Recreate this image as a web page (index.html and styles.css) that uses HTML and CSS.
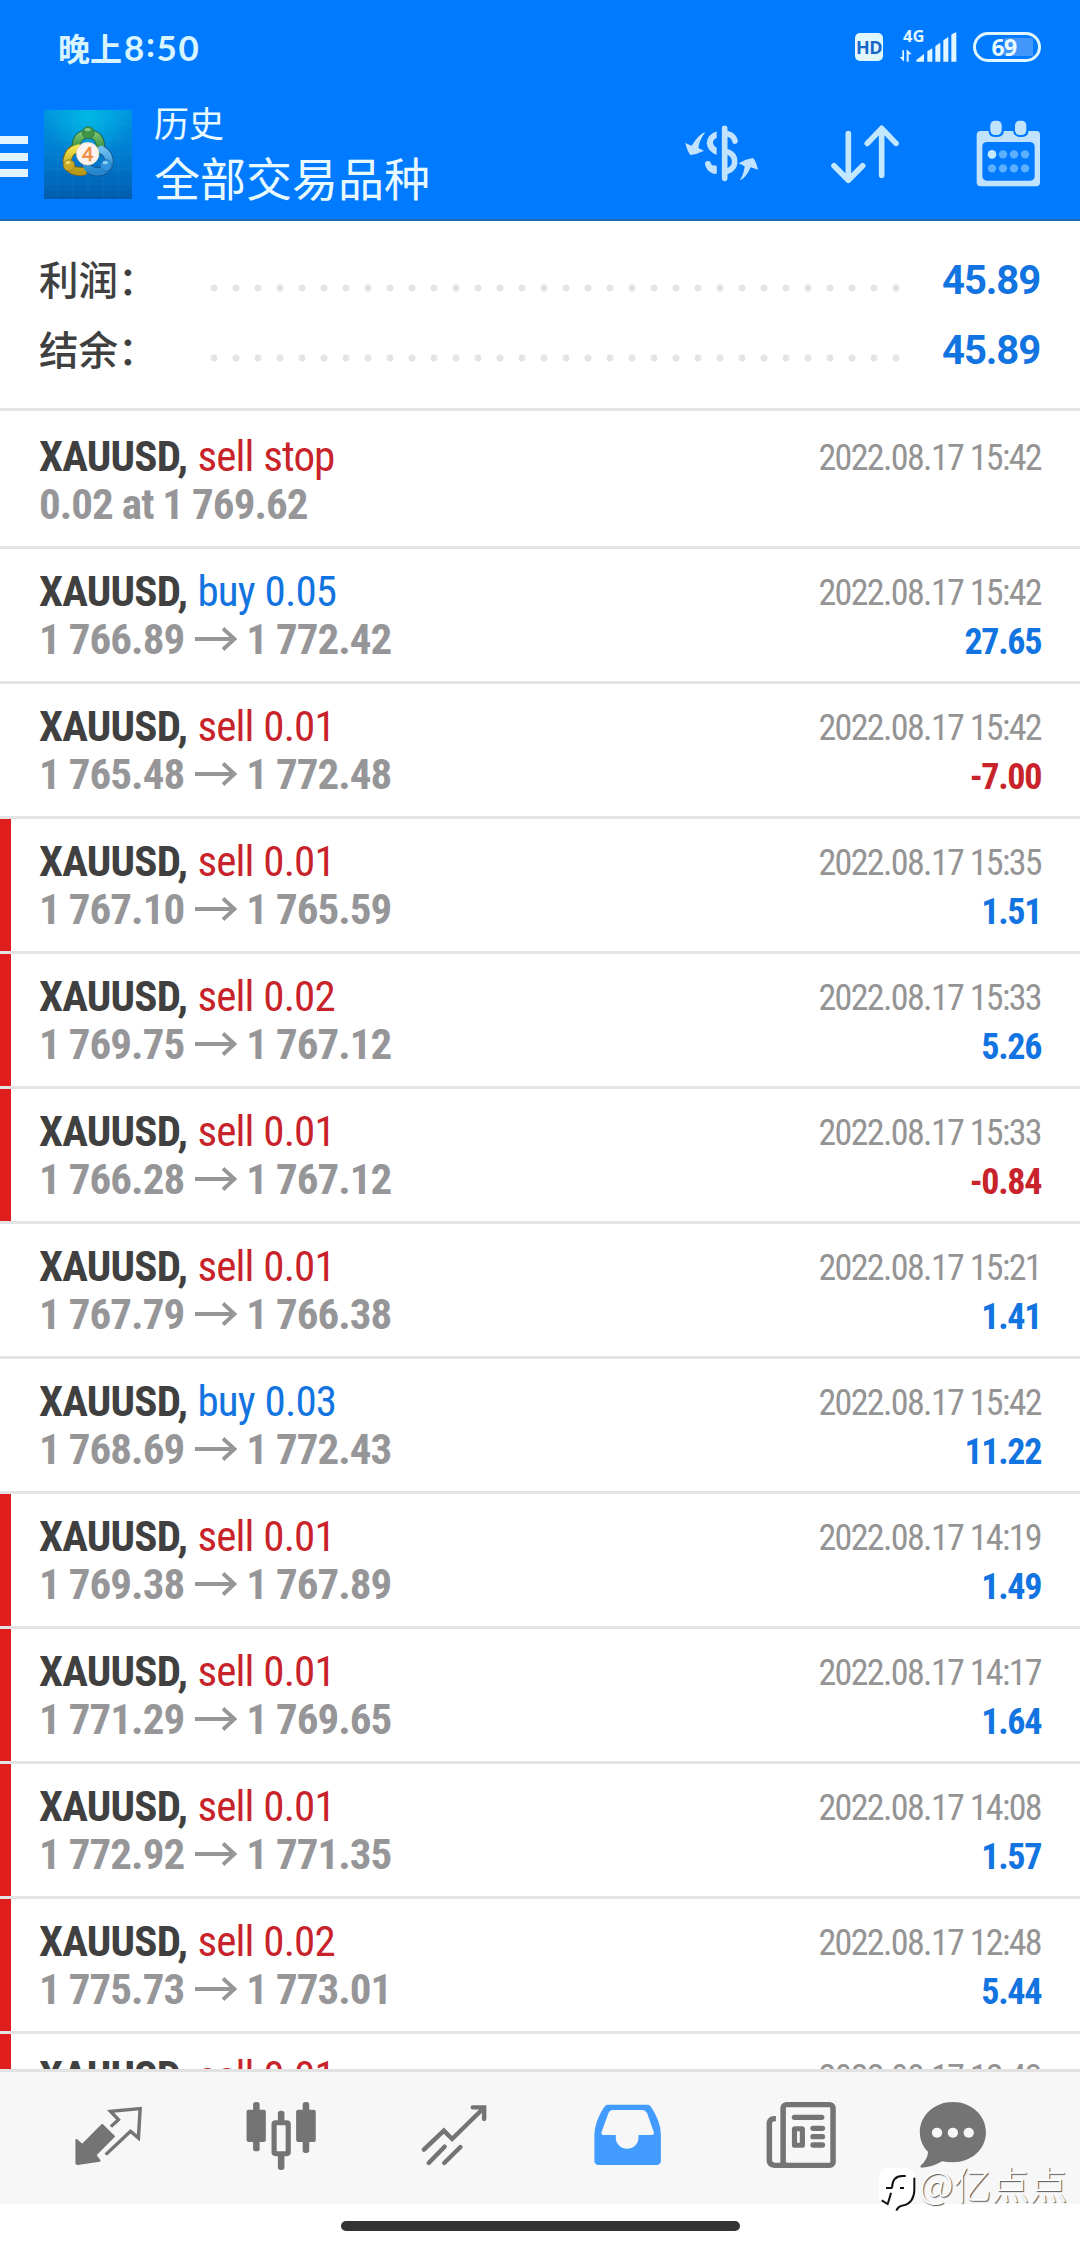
FILE: index.html
```html
<!DOCTYPE html>
<html lang="zh-CN">
<head>
<meta charset="utf-8">
<title>历史</title>
<link rel="stylesheet" href="styles.css">
</head>
<body>
<svg class="defs" width="0" height="0">
  <symbol id="arrow" viewBox="0 0 42 24"><path d="M0 12H39M28 1.5L39.5 12L28 22.5" fill="none" stroke="currentColor" stroke-width="3.8"/></symbol>
</svg>
<div class="screen">
  <header class="top">
    <div class="status">
      <div class="clock">晚上<span class="digits">8<span class="colon">:</span>50</span></div>
      <div class="indicators">
        <span class="hd">HD</span>
        <div class="signal">
          <span class="net">4G</span>
          <svg class="bars" viewBox="0 0 180 96">
            <path fill="#e0f7ff" d="M52 92V87L75 69V92ZM85 92V61L100 52V92ZM109 92V45L124 35V92ZM133 92V28L148 18V92ZM157 92V12Q158 9 172 4V92Z"/>
            <path fill="#e0f7ff" d="M10 58H15V92L2 78H10ZM23 55L38 70H29V92H23Z"/>
          </svg>
        </div>
        <div class="battery"><span class="level">69</span></div>
      </div>
    </div>
    <div class="bar">
      <div class="menu"><i></i><i></i><i></i></div>
      <svg class="logo" viewBox="0 0 264 267">
        <defs>
          <linearGradient id="bg" x1="0" y1="0" x2="0" y2="1"><stop offset="0" stop-color="#0096e0"/><stop offset=".5" stop-color="#007cd0"/><stop offset="1" stop-color="#005cae"/></linearGradient>
          <radialGradient id="glow" cx=".5" cy=".05" r=".5"><stop offset="0" stop-color="#00b8e4"/><stop offset="1" stop-color="#00b8e4" stop-opacity="0"/></radialGradient>
          <linearGradient id="gr" x1="0" y1="0" x2="0" y2="1"><stop offset="0" stop-color="#79c26e"/><stop offset="1" stop-color="#2f8a3c"/></linearGradient>
          <linearGradient id="ye" x1="0" y1="0" x2="0" y2="1"><stop offset="0" stop-color="#efe04a"/><stop offset="1" stop-color="#b79a18"/></linearGradient>
          <linearGradient id="bl" x1="0" y1="0" x2="0" y2="1"><stop offset="0" stop-color="#6dbdf0"/><stop offset="1" stop-color="#2386cc"/></linearGradient>
        </defs>
        <path fill="url(#bg)" d="M0 0H264V267H0Z"/>
        <path fill="url(#glow)" d="M0 0H264V267H0Z"/>
        <path d="M42 0V267M87 0V267M132 0V267M177 0V267M222 0V267M0 42H264M0 87H264M0 132H264M0 177H264M0 222H264" stroke="#5cc4f4" stroke-opacity=".15" stroke-width="2"/>
        <g fill="none" stroke-linecap="round">
          <path d="M97 120Q92 76 133 70Q174 76 169 120" stroke="#215d38" stroke-width="27"/>
          <path d="M102 114Q74 120 69 152Q72 188 118 184" stroke="#76631a" stroke-width="27"/>
          <path d="M172 118Q198 134 195 160Q182 192 150 184Q133 180 127 166" stroke="#174f8a" stroke-width="27"/>
          <path d="M97 120Q92 76 133 70Q174 76 169 120" stroke="url(#gr)" stroke-width="22"/>
          <path d="M102 114Q74 120 69 152Q72 188 118 184" stroke="url(#ye)" stroke-width="22"/>
          <path d="M172 118Q198 134 195 160Q182 192 150 184Q133 180 127 166" stroke="url(#bl)" stroke-width="22"/>
        </g>
        <circle cx="133" cy="68" r="18" fill="#3f9448" stroke="#2a6f3a" stroke-width="2"/>
        <circle cx="75" cy="166" r="17" fill="#c9a724" stroke="#8a7420" stroke-width="2"/>
        <circle cx="186" cy="166" r="17" fill="#3295dc" stroke="#1c68ac" stroke-width="2"/>
        <ellipse cx="131" cy="59" rx="9" ry="5" fill="#a3dc98" opacity=".7"/>
        <ellipse cx="72" cy="158" rx="8" ry="5" fill="#f6ea80" opacity=".8"/>
        <ellipse cx="184" cy="158" rx="8" ry="5" fill="#a6dbfa" opacity=".8"/>
        <circle cx="131" cy="131" r="34" fill="#fbf4ee" stroke="#e4cdb8" stroke-width="2"/>
        <text class="four" x="131" y="152" text-anchor="middle">4</text>
      </svg>
      <div class="titles">
        <div class="sub">历史</div>
        <div class="main">全部交易品种</div>
      </div>
      <div class="actions">
        <svg class="dollar" viewBox="0 0 300 240">
          <g fill="none" stroke="#c2e3ff" stroke-linecap="round">
            <path d="M149 40V190" stroke-width="17"/>
            <path d="M160 57Q176 61 180 78" stroke-width="17"/>
            <path d="M158 111Q180 118 179 142Q178 160 158 168" stroke-width="17"/>
            <path d="M99 147Q102 160 116 167" stroke-width="18"/>
          </g>
          <path fill="#c2e3ff" d="M125 49Q97 58 95 85Q98 110 125 120V98Q114 92 114 82Q115 73 125 69ZM91 51Q72 56 50 92L31 84Q36 107 46 120Q66 118 87 107L70 99Q72 78 91 51ZM194 196Q213 190 227 157L249 164Q243 138 234 129Q212 132 191 145L209 154Q206 180 194 196ZM125 152V177L112 174V150Z"/>
        </svg>
        <svg class="sort" viewBox="528 345 300 240">
          <path d="M625 401V539M582 497L625 541L668 497M725 526V386M682 430L725 385L768 430" fill="none" stroke="#c2e7ff" stroke-width="17" stroke-linecap="round" stroke-linejoin="round"/>
        </svg>
        <svg class="cal" viewBox="960 345 300 240">
          <path fill="#c2e3ff" fill-rule="evenodd" d="M1021 393H1046V398Q1050 412 1068 411Q1086 412 1091 398V393H1120V398Q1125 412 1143 411Q1160 412 1165 398V393H1190Q1200 394 1200 404V548Q1199 558 1189 559H1021Q1011 558 1010 548V404Q1011 394 1021 393ZM1040 426Q1027 427 1027 439V529Q1028 541 1040 542H1171Q1184 541 1184 529V439Q1183 427 1171 426Z"/>
          <rect x="1051" y="362" width="34" height="43" rx="14" fill="#c2e3ff"/><rect x="1125" y="362" width="34" height="43" rx="14" fill="#c2e3ff"/>
          <circle cx="1056" cy="463" r="13" fill="#c2eaff"/>
          <g fill="#5cb0ff"><circle cx="1089" cy="463" r="12.500"/><circle cx="1122" cy="463" r="12.500"/><circle cx="1155" cy="463" r="12.500"/><circle cx="1056" cy="505" r="12.500"/><circle cx="1089" cy="505" r="12.500"/><circle cx="1122" cy="505" r="12.500"/><circle cx="1155" cy="505" r="12.500"/></g>
        </svg>
      </div>
    </div>
  </header>

  <section class="summary">
    <div class="sum"><span class="label">利润：</span><span class="dots"></span><span class="total">45.89</span></div>
    <div class="sum"><span class="label">结余：</span><span class="dots"></span><span class="total">45.89</span></div>
  </section>

  <main class="list">
    <div class="row first"><div class="deal"><div class="name">XAUUSD, <span class="sell">sell stop</span></div><div class="price">0.02 at 1 769.62</div></div><div class="info"><div class="date">2022.08.17 15:42</div></div></div>
    <div class="row"><div class="deal"><div class="name">XAUUSD, <span class="buy">buy 0.05</span></div><div class="price">1 766.89<svg class="to"><use href="#arrow"/></svg>1 772.42</div></div><div class="info"><div class="date">2022.08.17 15:42</div><div class="pl">27.65</div></div></div>
    <div class="row"><div class="deal"><div class="name">XAUUSD, <span class="sell">sell 0.01</span></div><div class="price">1 765.48<svg class="to"><use href="#arrow"/></svg>1 772.48</div></div><div class="info"><div class="date">2022.08.17 15:42</div><div class="pl loss">-7.00</div></div></div>
    <div class="row marked"><div class="deal"><div class="name">XAUUSD, <span class="sell">sell 0.01</span></div><div class="price">1 767.10<svg class="to"><use href="#arrow"/></svg>1 765.59</div></div><div class="info"><div class="date">2022.08.17 15:35</div><div class="pl">1.51</div></div></div>
    <div class="row marked"><div class="deal"><div class="name">XAUUSD, <span class="sell">sell 0.02</span></div><div class="price">1 769.75<svg class="to"><use href="#arrow"/></svg>1 767.12</div></div><div class="info"><div class="date">2022.08.17 15:33</div><div class="pl">5.26</div></div></div>
    <div class="row marked"><div class="deal"><div class="name">XAUUSD, <span class="sell">sell 0.01</span></div><div class="price">1 766.28<svg class="to"><use href="#arrow"/></svg>1 767.12</div></div><div class="info"><div class="date">2022.08.17 15:33</div><div class="pl loss">-0.84</div></div></div>
    <div class="row"><div class="deal"><div class="name">XAUUSD, <span class="sell">sell 0.01</span></div><div class="price">1 767.79<svg class="to"><use href="#arrow"/></svg>1 766.38</div></div><div class="info"><div class="date">2022.08.17 15:21</div><div class="pl">1.41</div></div></div>
    <div class="row"><div class="deal"><div class="name">XAUUSD, <span class="buy">buy 0.03</span></div><div class="price">1 768.69<svg class="to"><use href="#arrow"/></svg>1 772.43</div></div><div class="info"><div class="date">2022.08.17 15:42</div><div class="pl">11.22</div></div></div>
    <div class="row marked"><div class="deal"><div class="name">XAUUSD, <span class="sell">sell 0.01</span></div><div class="price">1 769.38<svg class="to"><use href="#arrow"/></svg>1 767.89</div></div><div class="info"><div class="date">2022.08.17 14:19</div><div class="pl">1.49</div></div></div>
    <div class="row marked"><div class="deal"><div class="name">XAUUSD, <span class="sell">sell 0.01</span></div><div class="price">1 771.29<svg class="to"><use href="#arrow"/></svg>1 769.65</div></div><div class="info"><div class="date">2022.08.17 14:17</div><div class="pl">1.64</div></div></div>
    <div class="row marked"><div class="deal"><div class="name">XAUUSD, <span class="sell">sell 0.01</span></div><div class="price">1 772.92<svg class="to"><use href="#arrow"/></svg>1 771.35</div></div><div class="info"><div class="date">2022.08.17 14:08</div><div class="pl">1.57</div></div></div>
    <div class="row marked"><div class="deal"><div class="name">XAUUSD, <span class="sell">sell 0.02</span></div><div class="price">1 775.73<svg class="to"><use href="#arrow"/></svg>1 773.01</div></div><div class="info"><div class="date">2022.08.17 12:48</div><div class="pl">5.44</div></div></div>
    <div class="row marked"><div class="deal"><div class="name">XAUUSD, <span class="sell">sell 0.01</span></div></div><div class="info"><div class="date">2022.08.17 12:43</div></div></div>
  </main>

  <nav class="tabs">
    <svg class="tab" preserveAspectRatio="none" viewBox="63.900 231 502.400 240">
      <path fill="#747474" stroke="#747474" stroke-width="6" stroke-linejoin="round" d="M297 315L331 349L277 405L289 422L225 432L222 430V360L239 375Z"/>
      <path fill="none" stroke="#747474" stroke-width="10" d="M322 320L344 299L321 274L407 266L402 354L379 334L307 404"/>
    </svg>
    <svg class="tab" preserveAspectRatio="none" viewBox="566.300 231 502.400 240">
      <g fill="#747474"><rect x="716" y="269" width="56" height="97" rx="6"/><rect x="735" y="246" width="19" height="148" rx="8"/><rect x="860" y="269" width="57" height="97" rx="6"/><rect x="879" y="246" width="19" height="153" rx="8"/><rect x="807" y="272" width="19" height="35" rx="8"/><rect x="807" y="400" width="19" height="50" rx="8"/></g>
      <rect x="796" y="308" width="41" height="93" rx="4" fill="none" stroke="#747474" stroke-width="15"/>
    </svg>
    <svg class="tab" preserveAspectRatio="none" viewBox="1068.700 231 502.400 240">
      <g fill="none" stroke="#747474" stroke-width="13" stroke-linecap="round"><path d="M1231 389L1289 332L1313 357L1404 265M1373 262H1406V297"/><path d="M1245 429L1291 380M1290 429L1337 381"/></g>
    </svg>
    <svg class="tab" preserveAspectRatio="none" viewBox="2.900 231 502.400 240">
      <path fill="#429cff" fill-rule="evenodd" d="M196 254H314Q319 255 322 260C340 288 351 315 351 345V424Q350 434 340 435H168Q159 434 158 424V345C159 315 169 288 187 260Q190 255 196 254ZM213 270Q203 270 199 279L178 338Q178 345 184 345H220V353A33 33 0 0 0 286 353V345H326Q331 344 331 338L311 279Q307 271 298 270Z"/>
    </svg>
    <svg class="tab" preserveAspectRatio="none" viewBox="505.300 231 502.400 240">
      <g fill="none" stroke="#747474"><rect x="706" y="254" width="145" height="182" rx="10" stroke-width="16"/><path d="M685 296H681Q667 297 666 309V422Q667 435 681 436H720" stroke-width="16"/><path d="M739 292H818M793 325H820M793 350H820M793 375H820" stroke-width="16" stroke-linecap="round"/><rect x="739" y="326" width="23" height="50" rx="2" stroke-width="15"/></g>
    </svg>
    <svg class="tab last" preserveAspectRatio="none" viewBox="1007.700 231 377.500 240">
      <path fill="#747474" d="M1199 246C1254 246 1295 287 1295 337C1295 389 1252 427 1199 427Q1180 427 1168 424Q1140 441 1108 443Q1103 441 1105 437Q1125 420 1127 396Q1103 372 1103 337C1103 287 1144 246 1199 246Z"/>
      <g fill="#f7f7f7"><circle cx="1153" cy="338" r="15"/><circle cx="1199" cy="338" r="15"/><circle cx="1245" cy="338" r="15"/></g>
    </svg>
  </nav>
  <footer class="home"><div class="pill"></div></footer>

  <div class="mark">
    <svg class="badge" viewBox="20 228 120 140">
      <path fill="#fff" d="M52 233H108Q134 237 135 268V300Q131 345 84 360L75 350H60Q28 346 26 318V268Q27 238 52 233Z"/>
      <path fill="none" stroke="#111" stroke-width="6" d="M65 294Q66 258 96 258H106M47 294H66M89 294H101M62 308Q56 330 52 342L34 331M132 263V300Q131 338 100 346Q84 348 78 362"/>
    </svg>
    <span class="who">@亿点点</span>
  </div>
</div>
</body>
</html>
```

FILE: styles.css
```css
* { box-sizing: border-box; }
body { margin: 0; background: #fff; }
.defs { position: absolute; }
.screen {
  position: relative;
  width: 1080px;
  height: 2248px;
  display: flex;
  flex-direction: column;
  overflow: hidden;
  font-family: Roboto, "Noto Sans CJK SC", sans-serif;
}

/* header */
.top { height: 221px; flex: none; background: #007aff; border-bottom: 2px solid #1868b8; }
.status { height: 94px; padding: 0 39px 0 58px; display: flex; justify-content: space-between; align-items: center; }
.clock { font: 700 32px/40px "Noto Sans CJK SC", sans-serif; color: #d8f4ff; display: flex; align-items: center; white-space: nowrap; }
.digits { font: 700 35px/40px Lato, sans-serif; letter-spacing: 1.6px; margin-left: 2px; }
.colon { position: relative; top: -4px; }
.indicators { display: flex; align-items: center; }
.hd { width: 28px; height: 28px; border-radius: 5px; background: #e0f7ff; color: #1667c6; font: 700 18px/29px "Open Sans", sans-serif; display: flex; justify-content: center; letter-spacing: -0.5px; }
.signal { position: relative; width: 60px; height: 32px; margin-left: 16px; }
.net { position: absolute; left: 4px; top: -5px; font: 700 16.5px/20px "Open Sans", sans-serif; color: #e0f7ff; }
.bars { display: block; width: 60px; height: 32px; }
.battery { width: 68px; height: 30px; margin-left: 14px; border: 3px solid #e0f7ff; border-radius: 15px; display: flex; justify-content: center; align-items: center; background: linear-gradient(#4397fa, #4397fa) 28px 3px / 29px 18px no-repeat; }
.level { font: 700 23px/24px "Noto Sans", sans-serif; color: #e8faff; letter-spacing: -0.7px; margin-right: 6px; }
.bar { display: flex; }
.menu { width: 28px; height: 41px; margin-top: 42px; display: flex; flex-direction: column; justify-content: space-between; }
.menu i { height: 8px; background: #e0f4ff; }
.logo { width: 88px; height: 89px; margin: 16px 0 0 16px; }
.four { font: 400 58px "Noto Sans", sans-serif; fill: #f08c46; stroke: #f08c46; stroke-width: 2px; }
.titles { width: 290px; margin-left: 22px; color: #e8faff; font-family: "Noto Sans CJK SC", sans-serif; font-weight: 400; white-space: nowrap; }
.sub { font-size: 35px; line-height: 40px; margin-top: 8px; }
.main { font-size: 46px; line-height: 56px; margin-top: 6px; }
.actions { margin: 21px 0 0 231px; display: flex; gap: 44px; }
.actions svg { width: 100px; height: 80px; }
.actions .dollar { margin-right: -3px; }

/* summary */
.summary { height: 187px; flex: none; padding: 24px 40px 0 39px; display: flex; flex-direction: column; }
.sum { height: 70px; display: flex; align-items: center; }
.label { width: 163px; flex: none; font: 500 39.5px/70px "Noto Sans CJK SC", sans-serif; color: #404040; margin-top: -5px; }
.dots { width: 704px; flex: none; height: 8px; margin: 15px 0 0 0.5px; background: radial-gradient(circle at 11px 4px, #e4e4e4 3.2px, transparent 3.9px) 0 0 / 22px 8px repeat-x; }
.total { flex: 1; text-align: right; font-weight: 700; font-size: 40px; line-height: 70px; letter-spacing: -1.1px; color: #1274e0; margin-top: 1px; }

/* history rows */
.list { height: 1661px; flex: none; overflow: hidden; }
.row { height: 135px; border-top: 3px solid #e4e4e4; padding: 18px 39px 0 38px; display: flex; justify-content: space-between; font-family: "Roboto Condensed", Roboto, sans-serif; white-space: nowrap; }
.row.first { height: 138px; padding-top: 21px; }
.row.marked { background: linear-gradient(#e01e1e, #e01e1e) 0 0 / 11px 100% no-repeat; }
.name { font-weight: 700; font-size: 43px; line-height: 48px; letter-spacing: -0.8px; word-spacing: 1px; color: #404040; padding-left: 1px; }
.name span { font-weight: 400; letter-spacing: -0.9px; word-spacing: 1px; }
.sell { color: #c8232a; }
.buy { color: #1274e0; }
.price { display: flex; font-weight: 700; font-size: 43px; line-height: 48px; letter-spacing: -0.95px; color: #969699; padding-left: 1px; }
.to { width: 42px; height: 24px; margin: 12px 9px 0 11px; }
.info { text-align: right; }
.date { font-weight: 400; font-size: 36px; line-height: 48px; letter-spacing: -1.65px; color: #949494; padding-top: 2px; }
.pl { margin-top: 1px; font-weight: 700; font-size: 36px; line-height: 48px; letter-spacing: -1.35px; color: #1274e0; }
.pl.loss { color: #c8232a; }

/* tab bar */
.tabs { height: 135px; flex: none; background: #f7f7f7; border-top: 3px solid #e2e2e2; padding: 25px 0 0 22px; display: flex; }
.tab { width: 173px; height: 80px; flex: none; }
.tab.last { width: 130px; }
.home { flex: 1; background: #fff; padding-top: 17px; display: flex; justify-content: center; }
.pill { width: 399px; height: 10px; border-radius: 5px; background: #333; }

/* watermark over the tab bar */
.mark { position: absolute; left: 877px; top: 2166px; display: flex; align-items: flex-start; }
.badge { width: 40px; height: 46.700px; }
.who { margin: -3px 0 0 2px; font: 300 38px/40px "Noto Sans CJK SC", sans-serif; color: #fff; text-shadow: 1px 1px 1px #555; }
```
